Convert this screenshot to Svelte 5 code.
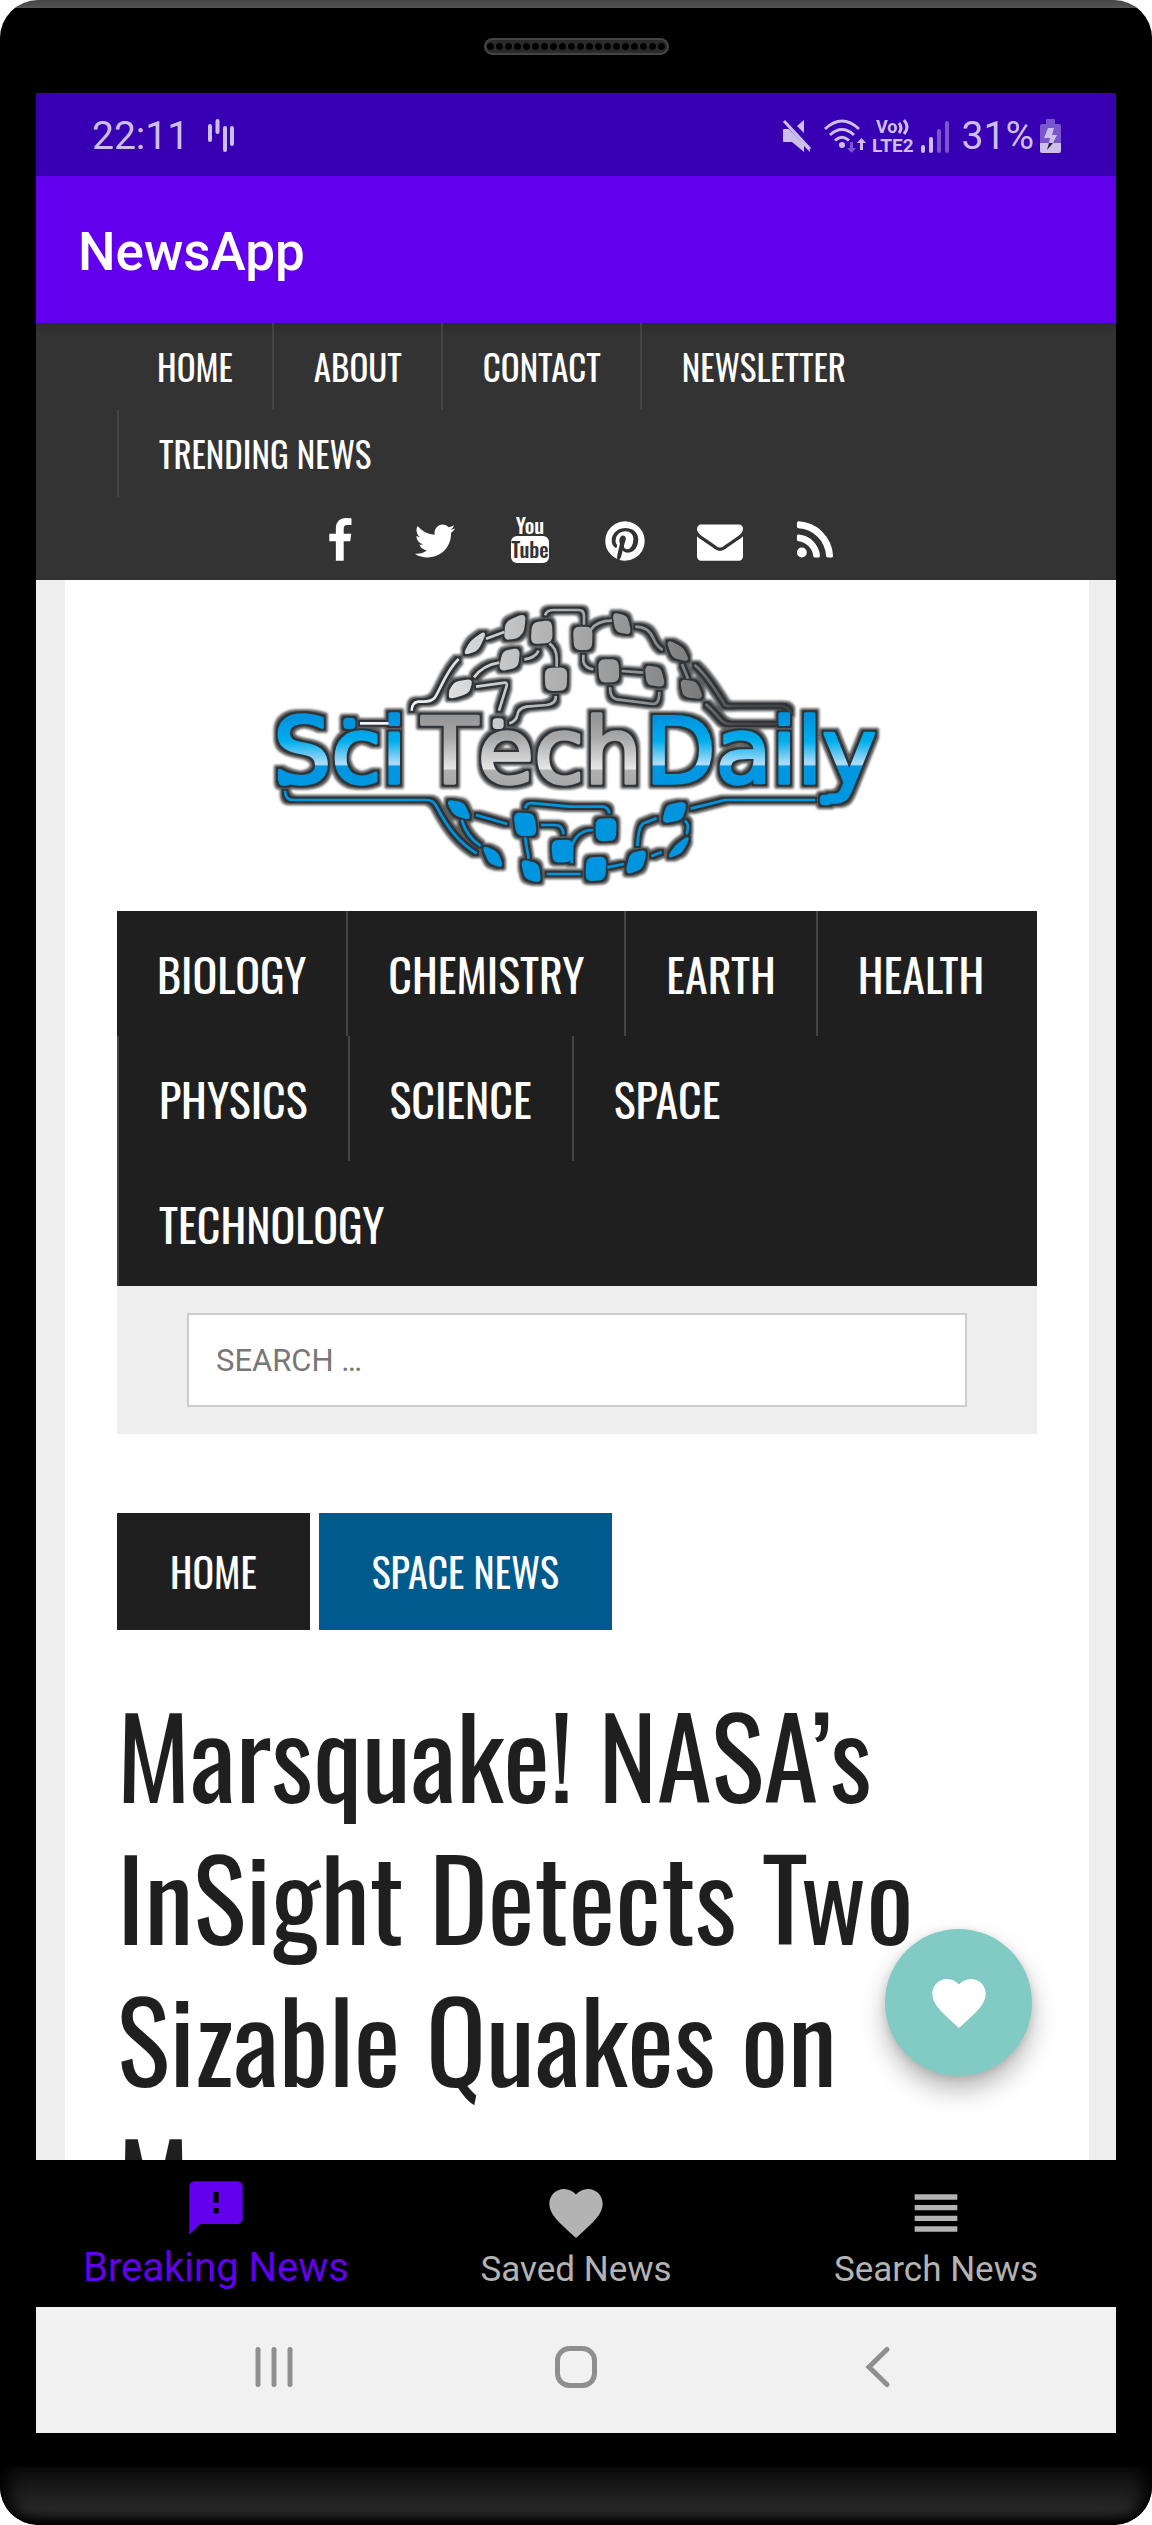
<script>
  const siteLinks = ['Home', 'About', 'Contact', 'Newsletter', 'Trending News'];
  const topics = ['Biology', 'Chemistry', 'Earth', 'Health', 'Physics', 'Science', 'Space', 'Technology'];

  const heart =
    'M12 21.35l-1.45-1.32C5.4 15.36 2 12.28 2 8.5 2 5.42 4.42 3 7.5 3c1.74 0 3.41.81 4.5 2.09C13.09 3.81 14.76 3 16.5 3 19.58 3 22 5.42 22 8.5c0 3.78-3.4 6.86-8.55 11.54L12 21.35z';

  const tabs = [
    { label: 'Breaking News', active: true, path: 'M20 2H4c-1.1 0-1.99.9-1.99 2L2 22l4-4h14c1.1 0 2-.9 2-2V4c0-1.1-.9-2-2-2zm-7 12h-2v-2h2v2zm0-4h-2V6h2v4z' },
    { label: 'Saved News', active: false, path: heart },
    { label: 'Search News', active: false, path: 'M4 15h16v-2H4v2zm0 4h16v-2H4v2zm0-8h16V9H4v2zm0-6v2h16V5H4z' }
  ];

  const social = [
    { name: 'Facebook', path: 'M1343 12v264h-157q-86 0-116 36t-30 108v189h293l-39 296h-254v759h-306v-759h-255v-296h255v-218q0-186 104-288.500t277-102.500q147 0 228 12z' },
    { name: 'Twitter', path: 'M1684 408q-67 98-162 167 1 14 1 42 0 130-38 259.500t-115.500 248.500-184.500 210.500-258 146-323 54.500q-271 0-496-145 35 4 78 4 225 0 401-138-105-2-188-64.500t-114-159.500q33 5 61 5 43 0 85-11-112-23-185.500-111.500t-73.500-205.500v-4q68 38 146 41-66-44-105-115t-39-154q0-88 44-163 121 149 294.500 238.500t371.500 99.500q-8-38-8-74 0-134 94.500-228.500t228.500-94.500q140 0 236 102 109-21 205-78-37 115-142 178 93-10 186-50z' },
    { name: 'YouTube', path: '' },
    { name: 'Pinterest', path: 'M1664 896q0 209-103 385.500t-279.500 279.500-385.500 103q-111 0-218-32 59-93 78-164 9-34 54-211 20 39 73 67.500t114 28.500q121 0 216-68.500t147-188.500 52-270q0-114-59.500-214t-172.500-163-255-63q-105 0-196 29t-154.500 77-109 110.500-67 129.500-21.500 134q0 104 40 183t117 111q30 12 38-20 2-7 8-31t8-30q6-23-11-43-51-61-51-151 0-151 104.500-259.500t273.500-108.500q151 0 235.500 82t84.500 213q0 170-68.500 289t-175.500 119q-61 0-98-43.500t-23-104.500q8-35 26.500-93.500t30-103 11.500-75.500q0-50-27-83t-77-33q-62 0-105 57t-43 142q0 73 25 122l-99 418q-17 70-13 177-206-91-333-281t-127-423q0-209 103-385.500t279.500-279.500 385.500-103 385.500 103 279.500 279.500 103 385.500z' },
    { name: 'Email', path: 'M1792 710v794q0 66-47 113t-113 47h-1472q-66 0-113-47t-47-113v-794q44 49 101 87 362 246 497 345 57 42 92.500 65.500t94.500 48 110 24.500h2q51 0 110-24.500t94.500-48 92.500-65.500q170-123 498-345 57-39 100-87zm0-294q0 79-49 151t-122 123q-376 261-468 325-10 7-42.500 31t-54 38.500-52 32.500-57.500 27-50 9h-2q-23 0-50-9t-57.500-27-52-32.500-54-38.500-42.500-31q-91-64-262-182.500t-205-142.500q-62-42-117-115.500t-55-136.500q0-78 41.500-130t118.500-52h1472q65 0 112.500 47t47.500 113z' },
    { name: 'RSS', path: 'M576 1344q0 80-56 136t-136 56-136-56-56-136 56-136 136-56 136 56 56 136zm512 123q2 28-17 48-18 21-47 21h-135q-25 0-43-16.500t-20-41.500q-22-229-184.500-391.500t-391.500-184.500q-25-2-41.500-20t-16.500-43v-135q0-29 21-47 17-17 43-17h5q160 13 306 80.500t259 181.500q114 113 181.500 259t80.500 306zm512 2q2 27-18 47-18 20-46 20h-143q-26 0-44.500-17.500t-19.500-42.500q-12-215-101-408.500t-231.500-336-336-231.500-408.500-102q-25-1-42.500-19.500t-17.500-43.500v-143q0-28 20-46 18-18 44-18h3q262 13 501.500 120t425.500 294q187 186 294 425.500t120 501.500z' }
  ];

  // Rounds the corners of a polygon; each corner starts 30% along its edges.
  function rounded(points) {
    const p = points.split(' ').map((pair) => pair.split(',').map(Number));
    const mix = (a, b) => [a[0] + (b[0] - a[0]) * 0.3, a[1] + (b[1] - a[1]) * 0.3].join(' ');
    return (
      p
        .map((corner, i) => {
          const before = p[(i + p.length - 1) % p.length];
          const after = p[(i + 1) % p.length];
          return `${i ? 'L' : 'M'}${mix(corner, before)}Q${corner.join(' ')} ${mix(corner, after)}`;
        })
        .join('') + 'Z'
    );
  }

  // Circuit globe: traces are stroked lines, nodes are rounded polygons.
  const upperTraces = [
    'M855 76Q860 60 880 60H955Q972 60 972 78V104',
    'M868 160Q890 175 890 205V230',
    'M836 182Q825 205 793 208',
    'M718 218Q670 225 642 262',
    'M733 126L678 146',
    'M596 207C560 240 540 300 525 322Q515 335 490 335H475Q455 338 455 362',
    'M648 290L735 278Q742 278 740 288L717 362',
    'M887 318Q890 340 860 345L800 350Q775 355 772 375Q768 395 748 400',
    'M300 400H418',
    'M992 120Q1010 92 1056 92',
    'M970 194V215Q975 235 1000 238',
    'M1126 110Q1165 110 1180 145Q1190 170 1208 180',
    'M1085 243L1150 248',
    'M1050 292Q1050 325 1070 328L1180 342Q1198 342 1198 306',
    'M1266 222L1284 266',
    'M1304 225Q1340 255 1395 345Q1400 350 1420 348H1560Q1588 348 1590 370',
    'M1337 342Q1360 362 1385 392Q1395 402 1410 402H1550'
  ];
  const upperNodes = [
    '740,98 794,74 788,124 770,142 736,146',
    '676,126 634,155 614,192 652,178',
    '820,101 872,94 874,154 816,159',
    '731,186 776,178 771,229 720,240',
    '588,278 634,271 624,307 570,324 572,300',
    '858,238 918,236 916,298 860,299',
    '943,114 994,114 992,176 946,176',
    '1061,71 1099,81 1110,130 1070,122',
    '1018,212 1072,212 1074,272 1022,274',
    '1158,230 1199,236 1212,287 1164,281',
    '1223,153 1266,175 1284,211 1240,200',
    '1264,272 1307,278 1326,324 1273,317',
    '702,389 727,389 727,413 702,413'
  ].map(rounded);
  const lowerTraces = [
    'M75 602Q75 630 100 630H500Q520 630 530 650Q580 750 650 790',
    'M648 675L742 702',
    'M605 690Q620 740 662 768',
    'M795 742L806 806',
    'M843 705H885Q910 705 910 733',
    'M795 655Q800 635 825 640L930 650H1025Q1045 650 1048 670',
    'M935 820V770Q950 720 1000 720',
    'M860 852H962',
    'M1042 832L1092 822',
    'M1132 768Q1135 710 1150 700L1190 685',
    'M1274 692Q1290 702 1280 732',
    'M1174 799L1205 786',
    'M1292 656L1395 630H1665'
  ];
  const lowerNodes = [
    '563,633 609,641 630,687 585,673',
    '670,770 710,788 726,829 690,817',
    '764,671 819,674 827,734 773,734',
    '786,812 832,823 840,874 798,864',
    '878,754 937,753 934,812 882,814',
    '1010,690 1066,688 1064,748 1012,750',
    '1222,648 1277,638 1264,686 1210,697',
    '1287,740 1248,769 1226,802 1264,785',
    '1113,793 1157,783 1144,834 1100,850',
    '983,806 1036,804 1032,866 980,870',
    '60,555 88,555 88,583 60,583',
    '254,387 282,387 282,413 254,413',
    '1684,618 1710,618 1710,642 1684,642'
  ].map(rounded);
</script>

<div class="phone">
  <div class="speaker"></div>

  <div class="screen">
    <div class="status">
      <span>22:11</span>
      <svg class="wave" viewBox="0 0 28 34" aria-hidden="true">
        <path d="M3 7V21M10.500 2V13M18 9V31M25 9V25" />
      </svg>
      <svg class="mute" viewBox="0 0 30 34" aria-hidden="true">
        <path d="M1 11Q1 10 2 10H7L28 31V33L22 27V33L10 23H2Q1 23 1 22Z" />
        <path d="M22 1V14L15 7Z" />
        <path class="slash" d="M2 2L28 30" />
      </svg>
      <svg class="wifi" viewBox="0 0 42 34" aria-hidden="true">
        <path class="arc" d="M1 10Q18-6 35 10M6 16Q18 5 30 16M11 21.500Q18 15 25 21.500" />
        <circle cx="18" cy="26" r="3" />
        <path class="faint" d="M26 23h3v6h3l-4.500 5l-4.500-5h3z" />
        <path d="M36 31h3v-7h3l-4.500-5l-4.500 5h3z" />
      </svg>
      <svg class="volte" viewBox="0 0 42 34" role="img" aria-label="VoLTE 2">
        <text class="small" x="4" y="14">Vo</text>
        <path d="M27 4Q31 9 27 14M32 1Q38 8 32 15" />
        <text x="0" y="33">LTE2</text>
      </svg>
      <svg class="signal" viewBox="0 0 28 34" aria-hidden="true">
        <path d="M2 28V32M10 20V32" />
        <path class="faint" d="M18 12V32M26 4V32" />
      </svg>
      <span>31%</span>
      <svg class="battery" viewBox="0 0 21 34" aria-hidden="true">
        <path class="faint" d="M6 1Q6 0 7 0H14Q15 0 15 1V5H19Q21 5 21 7V24H0V7Q0 5 2 5H6Z" />
        <path d="M0 24H21V32Q21 34 19 34H2Q0 34 0 32Z" />
        <path class="bolt" d="M8 9H14L12 16H17L13 24H9L10 19H4Z" />
        <path class="tip" d="M9 24H13L7 31Z" />
      </svg>
    </div>

    <header class="appbar"><h1>NewsApp</h1></header>

    <main class="webview">
      <div class="topbar">
        <nav class="site-links" aria-label="Site">
          {#each siteLinks as link}
            <a href="#top">{link}</a>
          {/each}
        </nav>
        <div class="social">
          {#each social as item}
            <a href="#top" aria-label={item.name}>
              {#if item.path}
                <svg viewBox="0 0 1792 1792"><path d={item.path} /></svg>
              {:else}
                <svg viewBox="0 0 46 46">
                  <text x="23" y="16">You</text>
                  <rect x="4" y="18" width="38" height="27" rx="6" />
                  <text class="cut" x="23" y="40">Tube</text>
                </svg>
              {/if}
            </a>
          {/each}
        </div>
      </div>

      <div class="page">
        <a class="logo" href="#top" aria-label="SciTechDaily">
          <svg viewBox="0 0 1902 930">
            <defs>
              <linearGradient id="steel" gradientUnits="userSpaceOnUse" x1="450" y1="330" x2="1600" y2="330">
                <stop offset="0" stop-color="#f2f2f2" />
                <stop offset=".35" stop-color="#b4b4b4" />
                <stop offset=".75" stop-color="#7c7c7c" />
                <stop offset=".85" stop-color="#484848" />
                <stop offset="1" stop-color="#404040" />
              </linearGradient>
              <linearGradient id="ocean" gradientUnits="userSpaceOnUse" x1="0" y1="380" x2="0" y2="590">
                <stop offset="0" stop-color="#0092df" />
                <stop offset=".35" stop-color="#00aeec" />
                <stop offset=".68" stop-color="#b5defa" />
                <stop offset=".71" stop-color="#0097e2" />
                <stop offset="1" stop-color="#0097e2" />
              </linearGradient>
              <linearGradient id="silver" gradientUnits="userSpaceOnUse" x1="0" y1="380" x2="0" y2="590">
                <stop offset="0" stop-color="#969696" />
                <stop offset=".3" stop-color="#a8a8a8" />
                <stop offset=".74" stop-color="#e6e6e6" />
                <stop offset=".77" stop-color="#b0b0b0" />
                <stop offset="1" stop-color="#a6a6a6" />
              </linearGradient>
              <filter id="rim" filterUnits="userSpaceOnUse" x="0" y="0" width="1902" height="930" color-interpolation-filters="sRGB">
                <feMorphology in="SourceAlpha" operator="dilate" radius="12" result="wide" />
                <feGaussianBlur in="wide" stdDeviation="3" result="soft" />
                <feFlood flood-color="#5c5c5c" />
                <feComposite in2="soft" operator="in" result="halo" />
                <feMorphology in="SourceAlpha" operator="dilate" radius="6" result="near" />
                <feGaussianBlur in="near" stdDeviation="1" result="edge" />
                <feFlood flood-color="#2f3438" />
                <feComposite in2="edge" operator="in" result="line" />
                <feMerge>
                  <feMergeNode in="halo" />
                  <feMergeNode in="line" />
                  <feMergeNode in="SourceGraphic" />
                </feMerge>
              </filter>
            </defs>
            <g filter="url(#rim)">
              <g class="steel">
                {#each upperTraces as d}<path class="trace" {d} />{/each}
                {#each upperNodes as d}<path class="node" {d} />{/each}
              </g>
              <g class="blue">
                {#each lowerTraces as d}<path class="trace" {d} />{/each}
                {#each lowerNodes as d}<path class="node" {d} />{/each}
              </g>
              <text class="ocean" x="40" y="580">Sci</text>
              <text class="silver" x="486" y="580">Tech</text>
              <text class="ocean" x="1156" y="580">Daily</text>
            </g>
          </svg>
        </a>

        <nav class="topics" aria-label="Topics">
          {#each topics as topic}
            <a href="#top">{topic}</a>
          {/each}
        </nav>
        <form class="search">
          <input type="search" placeholder="SEARCH …" aria-label="Search" />
        </form>

        <nav class="crumbs" aria-label="Breadcrumb">
          <a href="#top">Home</a>
          <a class="current" href="#top">Space News</a>
        </nav>
        <h2>Marsquake! NASA’s InSight Detects Two Sizable Quakes on Mars</h2>
      </div>

      <button class="fab" type="button" aria-label="Save article">
        <svg viewBox="0 0 24 24"><path d={heart} /></svg>
      </button>
    </main>

    <nav class="tabs" aria-label="App">
      {#each tabs as tab}
        <a href="#top" class:active={tab.active}>
          <svg viewBox="0 0 24 24" aria-hidden="true"><path d={tab.path} /></svg>
          <span>{tab.label}</span>
        </a>
      {/each}
    </nav>

    <div class="system">
      <button type="button" aria-label="Recent apps">
        <svg viewBox="0 0 44 44"><path class="bars" d="M6 4.500V39.500M22 4.500V39.500M38 4.500V39.500" /></svg>
      </button>
      <button type="button" aria-label="Home">
        <svg viewBox="0 0 44 44"><rect x="3.500" y="3.500" width="37" height="37" rx="12" /></svg>
      </button>
      <button type="button" aria-label="Back">
        <svg viewBox="0 0 44 44"><path d="M31 4.500L13 22L31 39.500" /></svg>
      </button>
    </div>
  </div>

  <div class="chin"></div>
</div>

<style>
  :global(body) {
    background: #fff;
  }

  .phone {
    --narrow: Oswald, 'Roboto Condensed', 'Liberation Sans Narrow', sans-serif;
    box-sizing: border-box;
    height: 100vh;
    display: flex;
    flex-direction: column;
    overflow: hidden;
    border-radius: 38px;
    background: linear-gradient(#444, #555 8px, #000 8px);
    font-family: Roboto, sans-serif;
  }

  .speaker {
    flex: none;
    box-sizing: border-box;
    width: 185px;
    height: 17px;
    margin: 38px auto;
    border: 2px solid #444;
    border-radius: 9px;
    background: radial-gradient(circle, #000 3px, #2a2a2a 4px) 0 0 / 9px 13px #222;
  }

  .screen {
    flex: 1;
    min-height: 0;
    margin: 0 36px;
    display: flex;
    flex-direction: column;
  }

  a {
    color: inherit;
    text-decoration: none;
  }

  .status {
    flex: none;
    box-sizing: border-box;
    height: 83px;
    padding: 2px 55px 0 56px;
    display: flex;
    align-items: center;
    background: #3700b3;
    color: #cdbfec;
    font-size: 39px;
  }
  .status svg {
    height: 34px;
    overflow: visible;
    fill: #cdbfec;
  }
  .status .faint {
    opacity: .45;
  }
  .wave {
    width: 28px;
    margin: 0 auto 0 18px;
  }
  .wave path,
  .signal path {
    fill: none;
    stroke: #cdbfec;
    stroke-width: 4;
    stroke-linecap: round;
  }
  .mute {
    width: 30px;
    margin-right: 12px;
  }
  .mute .slash {
    stroke: #cdbfec;
    stroke-width: 3;
  }
  .wifi {
    width: 42px;
    margin-right: 6px;
  }
  .wifi .arc,
  .volte path {
    fill: none;
    stroke: #cdbfec;
    stroke-width: 3;
  }
  .volte {
    width: 42px;
    margin-right: 7px;
    font: 700 19px Roboto, sans-serif;
  }
  .volte .small {
    font-size: 18px;
  }
  .signal {
    width: 28px;
    margin-right: 13px;
  }
  .battery {
    width: 21px;
    margin-left: 6px;
  }
  .battery .tip {
    fill: #222;
  }

  .appbar {
    flex: none;
    box-sizing: border-box;
    height: 147px;
    padding: 4px 42px 0;
    display: flex;
    align-items: center;
    background: #6200ee;
    color: #fff;
  }
  .appbar h1 {
    margin: 0;
    font-size: 53px;
    font-weight: 500;
  }

  .webview {
    flex: 1;
    min-height: 0;
    position: relative;
    overflow: hidden;
    display: flex;
    flex-direction: column;
    background: #eee;
  }

  .topbar {
    flex: none;
    padding: 0 79px 0 81px;
    background: linear-gradient(#2d2d2d, #333 12px);
    color: #fff;
  }
  .site-links,
  .topics {
    display: flex;
    flex-wrap: wrap;
    font-family: var(--narrow);
    text-transform: uppercase;
  }
  .site-links a {
    padding: 0 39px 0 40px;
    border-left: 2px solid #444;
    font-size: 35px;
    line-height: 87px;
  }
  .site-links a:first-child,
  .topics a:first-child {
    border-left: 0;
  }
  .social {
    box-sizing: border-box;
    height: 83px;
    padding-top: 5px;
    display: flex;
    align-items: center;
    justify-content: center;
    gap: 49px;
  }
  .social svg {
    display: block;
    width: 46px;
    height: 46px;
    overflow: visible;
    fill: #fff;
  }
  .social text {
    font: 500 21px var(--narrow);
    text-anchor: middle;
  }
  .social .cut {
    fill: #333;
  }

  .page {
    flex: 1;
    margin: 0 27px 0 29px;
    padding: 10px 52px 0;
    background: #fff;
  }
  .logo {
    display: block;
    width: 634px;
    margin: 0 auto 11px;
  }
  .logo svg {
    display: block;
    width: 100%;
  }
  .logo text {
    font: 274px 'DejaVu Sans', sans-serif;
    font-kerning: none;
    stroke-width: 10;
    stroke-linejoin: round;
  }
  .ocean {
    fill: url(#ocean);
    stroke: url(#ocean);
  }
  .silver {
    fill: url(#silver);
    stroke: url(#silver);
  }
  .trace {
    fill: none;
    stroke-width: 8;
  }
  .node {
    stroke-width: 8;
    stroke-linejoin: round;
  }
  .steel path {
    stroke: url(#steel);
  }
  .steel .node {
    fill: url(#steel);
  }
  .blue path {
    stroke: #0095df;
  }
  .blue .node {
    fill: #0095df;
  }

  .topics {
    background: #1f1f1f;
    color: #fff;
  }
  .topics a {
    padding: 0 40px;
    border-left: 2px solid #444;
    font-size: 46px;
    line-height: 125px;
  }
  .search {
    padding: 27px 70px;
    background: #eee;
  }
  .search input {
    box-sizing: border-box;
    display: block;
    width: 100%;
    height: 94px;
    padding: 0 27px;
    border: 2px solid #ccc;
    border-radius: 0;
    background: #fff;
    font: 31px Roboto, sans-serif;
  }
  .search input::placeholder {
    color: #777;
  }

  .crumbs {
    display: flex;
    gap: 9px;
    margin: 79px 0 52px;
    color: #fff;
    font-family: var(--narrow);
    font-size: 40px;
    line-height: 117px;
    text-transform: uppercase;
  }
  .crumbs a {
    padding: 0 53px;
    background: #1f1f1f;
  }
  .crumbs .current {
    background: #005b8c;
  }
  h2 {
    margin: 0;
    color: #1f1f1f;
    font: 400 111px / 142px var(--narrow);
  }

  .fab {
    position: absolute;
    right: 84px;
    bottom: 84px;
    width: 147px;
    height: 147px;
    padding: 0;
    display: grid;
    place-items: center;
    border: 0;
    border-radius: 50%;
    background: #81cbc4;
    box-shadow: 0 14px 26px rgba(0, 0, 0, .28), 0 2px 8px rgba(0, 0, 0, .12);
  }
  .fab svg {
    width: 64px;
    fill: #fff;
  }

  .tabs {
    flex: none;
    height: 147px;
    display: grid;
    grid-template-columns: repeat(3, 1fr);
    background: #000;
    color: #b3b3b3;
    font-size: 35px;
    line-height: 50px;
  }
  .tabs a {
    display: flex;
    flex-direction: column;
    align-items: center;
    padding-top: 21px;
  }
  .tabs .active {
    padding-top: 16px;
    color: #6200ee;
    font-size: 40px;
  }
  .tabs svg {
    width: 64px;
    height: 64px;
    fill: currentColor;
  }
  .tabs .active span {
    padding-top: 3px;
  }

  .system {
    flex: none;
    box-sizing: border-box;
    height: 126px;
    padding: 0 87px 6px;
    display: grid;
    grid-template-columns: repeat(3, 1fr);
    background: #f1f1f1;
  }
  .system button {
    padding: 0;
    display: grid;
    place-items: center;
    border: 0;
    background: none;
  }
  .system svg {
    width: 44px;
    fill: none;
    stroke: #8f8f8f;
    stroke-width: 5;
    stroke-linecap: round;
  }

  .chin {
    flex: none;
    height: 58px;
    margin-top: 34px;
    border-radius: 0 0 38px 38px;
    background: linear-gradient(#0c0c0c, #262626 70%, #222 80%, #000);
    box-shadow: inset 14px 0 16px -6px #000, inset -14px 0 16px -6px #000;
  }
</style>
